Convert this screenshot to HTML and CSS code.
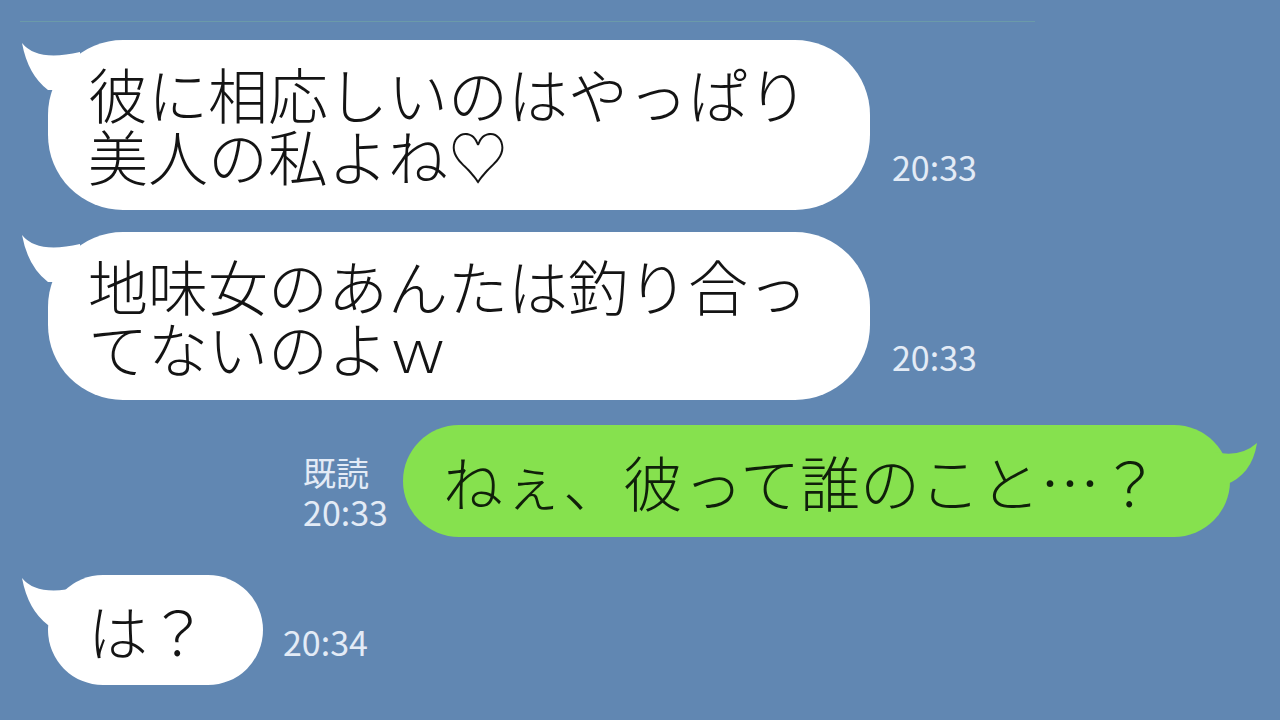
FILE: index.html
```html
<!DOCTYPE html>
<html lang="ja">
<head>
<meta charset="utf-8">
<title>LINE chat</title>
<link rel="stylesheet" href="styles.css">
</head>
<body>
<div class="rule"></div>
<main class="chat">
  <div class="row row-in row-1">
    <div class="bubble bubble-in b1">
      <svg class="tail tail-in" width="60" height="60" viewBox="0 0 60 60"><path d="M2 3 Q17 22 60 12 L60 50 L28 50 Q8 35 2 3 Z"/></svg>
      <span class="msg">彼に相応しいのはやっぱり<br>美人の私よね♡</span>
    </div>
    <div class="time">20:33</div>
  </div>
  <div class="row row-in row-2">
    <div class="bubble bubble-in b2">
      <svg class="tail tail-in" width="60" height="60" viewBox="0 0 60 60"><path d="M2 3 Q17 22 60 12 L60 50 L28 50 Q8 35 2 3 Z"/></svg>
      <span class="msg">地味女のあんたは釣り合っ<br>てないのよｗ</span>
    </div>
    <div class="time">20:33</div>
  </div>
  <div class="row row-out">
    <div class="status">
      <div class="read">既読</div>
      <div class="status-time">20:33</div>
    </div>
    <div class="bubble bubble-out">
      <svg class="tail tail-out" width="50" height="80" viewBox="0 0 50 80"><path d="M47 18 Q30 33 5 27 L5 75 L15 60 Q42 50 47 18 Z"/></svg>
      <span class="msg">ねぇ、彼って誰のこと…？</span>
    </div>
  </div>
  <div class="row row-in row-4">
    <div class="bubble bubble-in b4">
      <svg class="tail tail-in" width="60" height="60" viewBox="0 0 60 60"><path d="M2 3 Q17 22 60 12 L60 50 L28 50 Q8 35 2 3 Z"/></svg>
      <span class="msg">は？</span>
    </div>
    <div class="time">20:34</div>
  </div>
</main>
</body>
</html>
```
FILE: styles.css
```css
html, body {
  margin: 0;
  padding: 0;
}
body {
  width: 1280px;
  height: 720px;
  overflow: hidden;
  background: #6187b2;
  font-family: "Noto Sans CJK JP", "Noto Sans", sans-serif;
}
.rule {
  height: 1px;
  width: 1015px;
  margin: 21px 0 0 20px;
  background: #6b9aa9;
}
.chat {
  display: flex;
  flex-direction: column;
  padding-left: 48px;
}
.row {
  display: flex;
  align-items: flex-end;
}
.row-in {
  gap: 22px;
}
.row-1 { margin-top: 18px; }
.row-2 { margin-top: 22px; }
.row-out {
  margin-top: 25px;
  justify-content: flex-end;
  margin-right: 50px;
  gap: 15px;
}
.row-4 { margin-top: 38px; gap: 20px; }

.bubble {
  position: relative;
  font-family: "Noto Sans CJK JP Light", "Noto Sans CJK JP DemiLight", "Noto Sans CJK JP", sans-serif;
  font-size: 60px;
  line-height: 62px;
  color: #141414;
  font-weight: 300;
  white-space: nowrap;
}
.bubble-in {
  background: #ffffff;
  border-radius: 75px;
}
.b1 { padding: 22px 62px 24px 40px; }
.b2 { padding: 22px 62px 22px 40px; }
.b4 { padding: 24px 55px 24px 40px; border-radius: 56px; }
.msg {
  position: relative;
  display: block;
}
.tail {
  position: absolute;
  top: 0;
}
.tail-in {
  left: -28px;
  fill: #ffffff;
}
.bubble-out {
  background: #86e14e;
  border-radius: 56px;
  padding: 25px 70px 25px 40px;
  color: #10200a;
}
.tail-out {
  right: -30px;
  fill: #86e14e;
}
.time {
  font-size: 34px;
  line-height: 34px;
  color: #e3ebf6;
  margin-bottom: 26px;
}
.status {
  color: #e3ebf6;
  margin-bottom: 5px;
  text-align: left;
}
.read {
  font-size: 33px;
  line-height: 40px;
}
.status-time {
  font-size: 34px;
  line-height: 40px;
}
```
